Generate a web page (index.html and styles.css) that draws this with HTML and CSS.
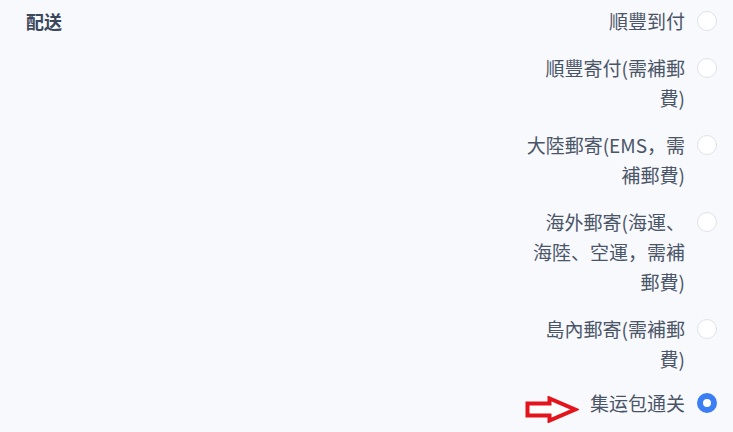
FILE: index.html
```html
<!DOCTYPE html>
<html lang="zh-CN">
<head>
<meta charset="utf-8">
<title>配送</title>
<link rel="stylesheet" href="styles.css">
</head>
<body>
<section class="section">
  <h3 class="title">配送</h3>
  <ul class="options">
    <li class="option"><span class="label">順豐到付</span><span class="radio"></span></li>
    <li class="option"><span class="label">順豐寄付(需補郵<br>費)</span><span class="radio"></span></li>
    <li class="option"><span class="label">大陸郵寄(EMS，需<br>補郵費)</span><span class="radio"></span></li>
    <li class="option"><span class="label">海外郵寄(海運、<br>海陸、空運，需補<br>郵費)</span><span class="radio"></span></li>
    <li class="option"><span class="label">島內郵寄(需補郵<br>費)</span><span class="radio"></span></li>
    <li class="option option-last"><span class="label">集运包通关</span><span class="radio radio-checked"></span></li>
  </ul>
  <svg class="arrow" width="54" height="27" viewBox="0 0 54 27" aria-hidden="true">
    <polygon points="2.5,7.5 24.5,7.5 24.5,2.5 50,13.5 24.5,24.5 24.5,19.5 2.5,19.5" fill="#ffffff" stroke="#e3141c" stroke-width="4" stroke-linejoin="miter"/>
  </svg>
</section>
</body>
</html>
```
FILE: styles.css
```css
html, body {
  margin: 0;
  padding: 0;
  background: #f8f9fc;
}

body {
  font-family: "Noto Sans CJK SC", "Noto Sans CJK TC", "Noto Sans", sans-serif;
  color: #4a5568;
  width: 733px;
  height: 432px;
  overflow: hidden;
}

.section {
  position: relative;
  display: flex;
  justify-content: space-between;
  align-items: flex-start;
  padding: 6px 16px 0 26px;
}

.title {
  margin: 0;
  font-size: 18px;
  font-weight: 700;
  line-height: 30px;
  color: #3a475d;
}

.options {
  list-style: none;
  margin: 0;
  padding: 0;
  display: flex;
  flex-direction: column;
  align-items: flex-end;
  gap: 17px;
}

.option {
  display: flex;
  align-items: flex-start;
  gap: 12px;
}

.option-last {
  margin-top: -3px;
}

.label {
  text-align: right;
  font-size: 19px;
  line-height: 30px;
  white-space: nowrap;
  color: #4a5568;
}

.radio {
  flex: none;
  box-sizing: border-box;
  width: 20px;
  height: 20px;
  margin-top: 5px;
  border-radius: 50%;
  border: 1px solid #dfe2e8;
  background: #ffffff;
}

.radio-checked {
  border: 6px solid #3b7df3;
  background: #ffffff;
}

.arrow {
  position: absolute;
  left: 525px;
  top: 396px;
}
```
